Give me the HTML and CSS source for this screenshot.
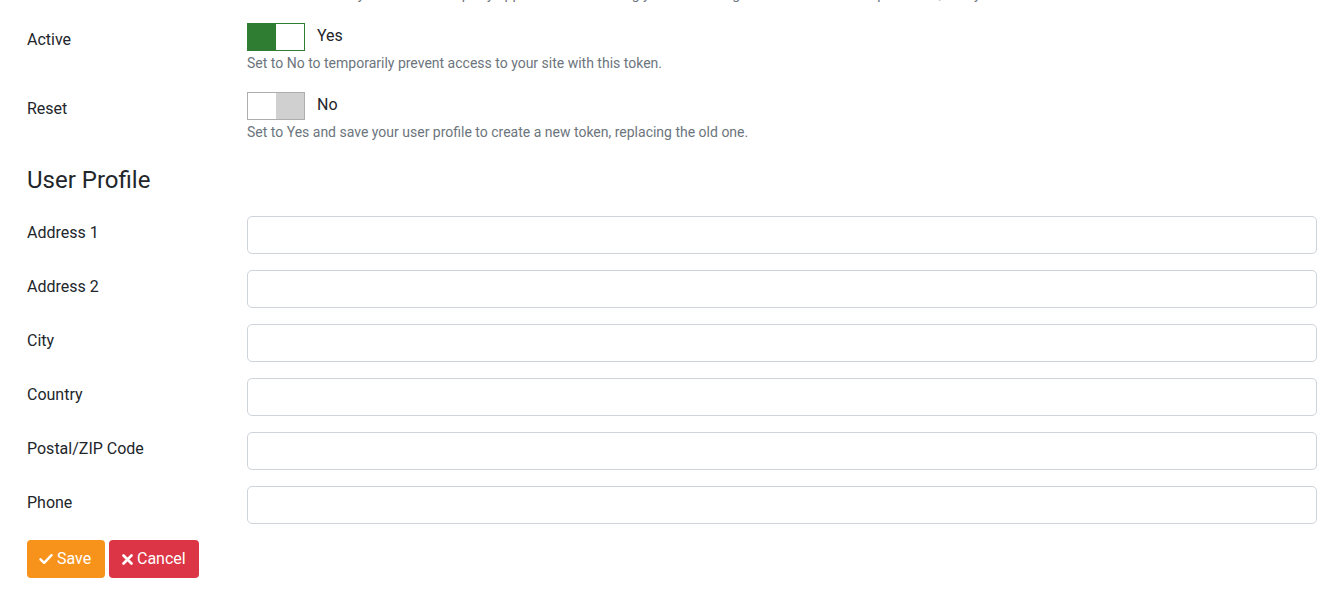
FILE: index.html
```html
<!DOCTYPE html>
<html lang="en">
<head>
<meta charset="utf-8">
<title>Edit Profile</title>
<link rel="stylesheet" href="styles.css">
</head>
<body>
<form class="page">
  <p class="help help-clipped">Use this token only in trusted third party applications accessing your site through the Joomla API. Keep it secret, always.</p>

  <div class="row row-switch">
    <div class="label">Active</div>
    <div class="control">
      <div class="switch-line">
        <span class="switch switch-on"><span class="knob-fill"></span><span class="knob-rest"></span></span>
        <span class="switch-text">Yes</span>
      </div>
      <p class="help">Set to No to temporarily prevent access to your site with this token.</p>
    </div>
  </div>

  <div class="row row-switch">
    <div class="label">Reset</div>
    <div class="control">
      <div class="switch-line">
        <span class="switch switch-off"><span class="knob-rest"></span><span class="knob-fill"></span></span>
        <span class="switch-text">No</span>
      </div>
      <p class="help">Set to Yes and save your user profile to create a new token, replacing the old one.</p>
    </div>
  </div>

  <h2 class="section-title">User Profile</h2>

  <div class="row row-input"><label class="label">Address 1</label><input class="input" type="text"></div>
  <div class="row row-input"><label class="label">Address 2</label><input class="input" type="text"></div>
  <div class="row row-input"><label class="label">City</label><input class="input" type="text"></div>
  <div class="row row-input"><label class="label">Country</label><input class="input" type="text"></div>
  <div class="row row-input"><label class="label">Postal/ZIP Code</label><input class="input" type="text"></div>
  <div class="row row-input"><label class="label">Phone</label><input class="input" type="text"></div>

  <div class="actions">
    <button type="button" class="btn btn-save">
      <svg class="icon" width="14" height="12" viewBox="0 0 14 12"><path d="M1.5 6.3 L5.2 9.8 L12.5 2.2" fill="none" stroke="#fff" stroke-width="2.4" stroke-linecap="round" stroke-linejoin="round"/></svg>
      <span>Save</span>
    </button>
    <button type="button" class="btn btn-cancel">
      <svg class="icon" width="11" height="11" viewBox="0 0 11 11"><path d="M1.5 1.5 L9.5 9.5 M9.5 1.5 L1.5 9.5" fill="none" stroke="#fff" stroke-width="2.6" stroke-linecap="round"/></svg>
      <span>Cancel</span>
    </button>
  </div>
</form>
</body>
</html>
```
FILE: styles.css
```css
* { box-sizing: border-box; }

html, body {
  margin: 0;
  padding: 0;
  background: #fff;
  overflow: hidden;
}

body {
  font-family: Roboto, "Liberation Sans", Arial, sans-serif;
  color: #22262a;
  font-size: 16px;
  line-height: 24px;
}

.page {
  padding: 0 23px 0 27px;
}

.help {
  margin: 2px 0 0;
  font-size: 14px;
  line-height: 21px;
  color: #6c757d;
}

.help-clipped {
  margin: -16px 0 0 220px;
  white-space: nowrap;
  overflow: hidden;
}

.row {
  display: grid;
  grid-template-columns: 220px 1fr;
  align-items: start;
}

.row-switch {
  margin-top: 18px;
}

.row-switch .label {
  padding-top: 5px;
}

.switch-line {
  display: flex;
  align-items: center;
  gap: 12px;
}

.switch-text {
  position: relative;
  top: -1px;
}

.switch {
  display: flex;
  width: 58px;
  height: 28px;
  border: 1px solid;
}

.switch span { flex: 1; }

.switch-on { border-color: #2e7d32; }
.switch-on .knob-fill { background: #2e7d32; }
.switch-on .knob-rest { background: #fff; }

.switch-off { border-color: #adadad; }
.switch-off .knob-fill { background: #d0d0d0; }
.switch-off .knob-rest { background: #fff; }

.section-title {
  margin: 23px 0 0;
  font-size: 24px;
  font-weight: 400;
  line-height: 28px;
  color: #22262a;
}

.row-input {
  margin-bottom: 16px;
}

.section-title + .row-input {
  margin-top: 22px;
}

.row-input .label {
  padding-top: 5px;
}

.input {
  display: block;
  width: 100%;
  height: 38px;
  border: 1px solid #ced4da;
  border-radius: 5px;
  background: #fff;
  font: inherit;
  padding: 6px 12px;
}

.actions {
  display: flex;
  gap: 4px;
}

.btn {
  display: flex;
  align-items: center;
  gap: 4px;
  height: 38px;
  border: 0;
  border-radius: 4px;
  color: #fff;
  font-family: Roboto, "Liberation Sans", Arial, sans-serif;
  font-size: 16px;
  line-height: 24px;
  padding: 0 12px;
  cursor: pointer;
}

.btn-save {
  width: 78px;
  background: #f7931a;
}

.btn-cancel {
  width: 90px;
  background: #dc3545;
  padding-left: 13px;
}

.icon { flex: none; }
```
